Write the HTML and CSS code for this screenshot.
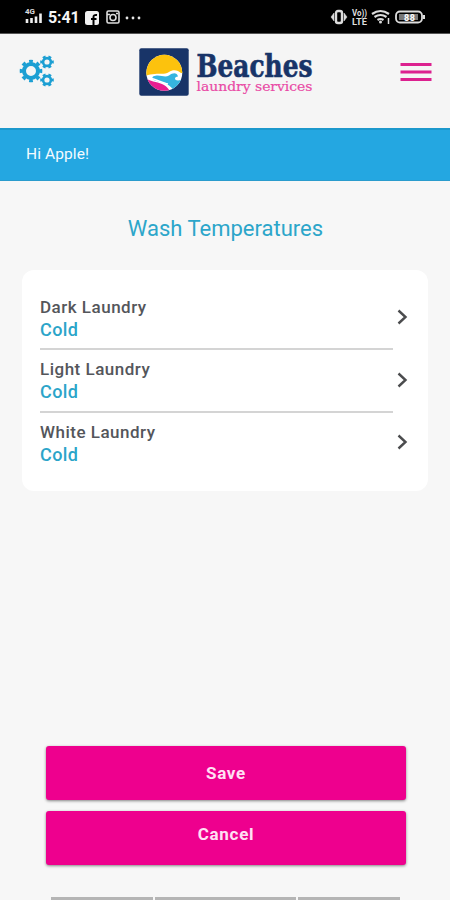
FILE: index.html
```html
<!DOCTYPE html>
<html lang="en">
<head>
<meta charset="utf-8">
<meta name="viewport" content="width=device-width">
<title>Wash Temperatures</title>
<link rel="stylesheet" href="styles.css">
</head>
<body>
<div class="status">
  <svg class="signal" width="19" height="16" viewBox="0 0 19 16">
    <text x="0" y="6" font-size="7" font-weight="700" fill="#ddd" textLength="10" lengthAdjust="spacingAndGlyphs">4G</text>
    <path d="M2 11v4M6.500 10v5M11 8.500V15M15.500 5.500V15" stroke="#eee" stroke-width="2.600"/>
  </svg>
  <span class="clock">5:41</span>
  <svg class="fb" width="14" height="14" viewBox="0 0 14 14">
    <rect width="14" height="14" rx="2.500" fill="#f2f2f2"/>
    <path d="M8.500 14V6q0-2.500 3.500-2M6 8h5.500" fill="none" stroke="#000" stroke-width="2"/>
  </svg>
  <svg class="insta" width="14" height="14" viewBox="0 0 14 14" fill="none" stroke="#ddd" stroke-width="1.600">
    <rect x="1" y="1" width="12" height="12" rx="1.500"/><circle cx="7" cy="7.500" r="3"/><path d="M1 4.500h3M10 3.500h2"/>
  </svg>
  <svg class="dots" width="16" height="4" viewBox="0 0 16 4" fill="#e5e5e5"><circle cx="2" cy="2" r="1.400"/><circle cx="8" cy="2" r="1.400"/><circle cx="14" cy="2" r="1.400"/></svg>
  <svg class="system" width="97" height="18" viewBox="0 0 97 18" fill="none" stroke="#ddd">
    <rect x="6" y="3" width="6" height="12" rx="2" stroke-width="2.400"/>
    <path d="M4 5 1 9l3 4zM14 5l3 4-3 4z" fill="#ddd" stroke-width=".5"/>
    <g fill="#ddd" stroke="none" font-weight="700" font-size="8.500"><text x="22" y="8" textLength="15" lengthAdjust="spacingAndGlyphs">Vo))</text><text x="22" y="16.500" textLength="15" lengthAdjust="spacingAndGlyphs">LTE</text></g>
    <path d="M42 6q8.500-6 17 0M44.500 9q6-4 12 0M47.500 12q3-2 6 0" stroke-width="2.200"/>
    <circle cx="50.500" cy="14" r="1.500" fill="#ddd" stroke="none"/><path d="M58.500 10v6" stroke-width="1.500"/>
    <rect x="66" y="3.500" width="26" height="11" rx="4" stroke-width="1.800"/>
    <rect x="69" y="6" width="19" height="6" fill="#777" stroke="none"/><path d="M94 7v4" stroke-width="2"/>
    <text x="74" y="12.500" font-size="9" font-weight="700" fill="#fff" stroke="none" textLength="11">88</text>
  </svg>
</div>
<header class="header">
  <svg class="gears" width="36" height="32" viewBox="0 0 36 32" fill="none" stroke="#1c9fd3">
    <circle cx="12" cy="16" r="7" stroke-width="4"/><circle cx="12" cy="16" r="9.700" stroke-width="3.200" pathLength="16" stroke-dasharray="1 1" stroke-dashoffset=".5"/>
    <circle cx="28" cy="7" r="3.900" stroke-width="2.600"/><circle cx="28" cy="7" r="5.700" stroke-width="2.200" pathLength="12" stroke-dasharray="1 1" stroke-dashoffset=".5"/>
    <circle cx="28" cy="25" r="3.900" stroke-width="2.600"/><circle cx="28" cy="25" r="5.700" stroke-width="2.200" pathLength="12" stroke-dasharray="1 1" stroke-dashoffset=".5"/>
  </svg>
  <svg class="logo" width="176" height="50" viewBox="0 0 176 50">
    <defs><clipPath id="sun"><circle cx="25.300" cy="24.800" r="18"/></clipPath></defs>
    <rect x=".3" y=".3" width="49.400" height="47.400" rx="2" fill="#183468"/>
    <g clip-path="url(#sun)">
      <rect x="6" y="5" width="40" height="40" fill="#fff"/>
      <path d="M6 28V4h40v21h-4c-3-3-8-4-12-1-5 3-9 1-14 2-4 0-7 1-10 2z" fill="#fcc20d"/>
      <path d="M14 28.500c7-3 11 2 16-1 4-3 8-3 9 1-4 0-4 4 0 4 3 0 5-2 6-4-1 8-6 13-11 13-4-6-11-7-18-9-3-1-3-3-2-4z" fill="#35b5df"/>
      <path d="M8 31c5 3 12 3 17 6 3 2 5 4 6 7-12 2-20-4-23-13z" fill="#e91e91"/>
      <path d="M10 30c7 1 13 5 19 6" fill="none" stroke="#fff" stroke-width="1.400"/>
    </g>
    <g font-family="'DejaVu Serif', serif">
      <text x="57.500" y="28.700" font-size="31" font-weight="700" fill="#183468" stroke="#183468" stroke-width=".7" textLength="116" lengthAdjust="spacingAndGlyphs">Beaches</text>
      <text x="57.500" y="42.700" font-size="13" fill="#e94aa5" stroke="#e94aa5" stroke-width=".2" textLength="116" lengthAdjust="spacingAndGlyphs">laundry services</text>
    </g>
  </svg>
  <svg class="menu" width="32" height="20" viewBox="0 0 32 20"><path d="M.5 2.500h31M.5 10h31M.5 17.500h31" stroke="#dc218f" stroke-width="2.800"/></svg>
</header>
<div class="greeting">Hi Apple!</div>
<h1>Wash Temperatures</h1>
<main class="card">
  <div class="row"><div class="info"><div class="name">Dark Laundry</div><div class="temp">Cold</div></div><svg width="11" height="16" viewBox="0 0 11 16"><path d="m1.500 1.500 7 6.500-7 6.500"/></svg></div>
  <div class="row"><div class="info"><div class="name">Light Laundry</div><div class="temp">Cold</div></div><svg width="11" height="16" viewBox="0 0 11 16"><path d="m1.500 1.500 7 6.500-7 6.500"/></svg></div>
  <div class="row"><div class="info"><div class="name">White Laundry</div><div class="temp">Cold</div></div><svg width="11" height="16" viewBox="0 0 11 16"><path d="m1.500 1.500 7 6.500-7 6.500"/></svg></div>
</main>
<div class="actions">
  <button>Save</button>
  <button class="cancel">Cancel</button>
</div>
<div class="tabs"><i></i><i></i><i></i></div>
</body>
</html>
```
FILE: styles.css
```css
* { box-sizing: border-box; }
body { margin: 0; height: 900px; overflow: hidden; display: flex; flex-direction: column; background: #f7f7f7; font-family: Roboto, sans-serif; }
svg { display: block; flex: none; overflow: visible; }
.status { height: 34px; background: #000; border-bottom: 1px solid #555; display: flex; align-items: center; padding-left: 25px; flex: none; }
.signal { margin-top: -2px; }
.clock { color: #f5f5f5; font-size: 16px; font-weight: 700; letter-spacing: -.1px; width: 32px; margin: 2px 0 0 4px; }
.fb { margin: 2px 0 0 5px; }
.insta { margin: 1px 0 0 7px; }
.dots { margin: 2px 0 0 5px; }
.system { margin-left: auto; margin-right: 23px; }
.header { height: 94px; background: #f5f5f5; display: flex; align-items: flex-start; flex: none; padding: 14px 18px 0 19px; }
.gears { margin-top: 7px; }
.logo { margin-left: 84px; }
.menu { margin: 14px 0 0 auto; }
.greeting { height: 53px; flex: none; background: #24a7e1; border-top: 2px solid #1c98cc; border-bottom: 1px solid #2a9ccd; padding: 0 26px 1px; color: #f4fbff; font-size: 15.5px; line-height: 49px; letter-spacing: .1px; }
h1 { margin: 34px 0 0 1px; height: 28px; line-height: 28px; font-size: 22px; font-weight: 400; text-align: center; color: #2ca6ca; flex: none; }
.card { margin: 27px 22px 0; height: 221px; flex: none; background: #fff; border-radius: 12px; padding: 18px 20px 0 18px; }
.row { display: flex; align-items: center; height: 62.400px; }
.info { width: 353px; height: 100%; padding-top: 8px; border-bottom: 2px solid #d4d4d4; }
.row:last-child .info { border-color: transparent; }
.name { font-size: 17px; line-height: 22px; font-weight: 500; color: #54565b; letter-spacing: .5px; }
.temp { font-size: 18px; line-height: 24px; font-weight: 500; color: #2ba5c9; letter-spacing: .4px; }
.row svg { margin: 0 0 4px 4px; }
.row path { fill: none; stroke: #4b4c4e; stroke-width: 2.400px; }
.actions { margin: 255px 44px 0 46px; display: flex; flex-direction: column; gap: 11px; flex: none; }
button { height: 54px; border: 0; border-radius: 3px; padding: 0; background: #ee008e; color: #ffe0f4; font: 700 17px Roboto, sans-serif; letter-spacing: .7px; box-shadow: 0 1px 3px #0007; }
.cancel { padding-bottom: 8px; }
.tabs { margin: auto 50px 0 51px; height: 3px; display: grid; grid-template-columns: 102px 141px 1fr; gap: 2px; }
.tabs i { background: #b5b5b5; }
```
